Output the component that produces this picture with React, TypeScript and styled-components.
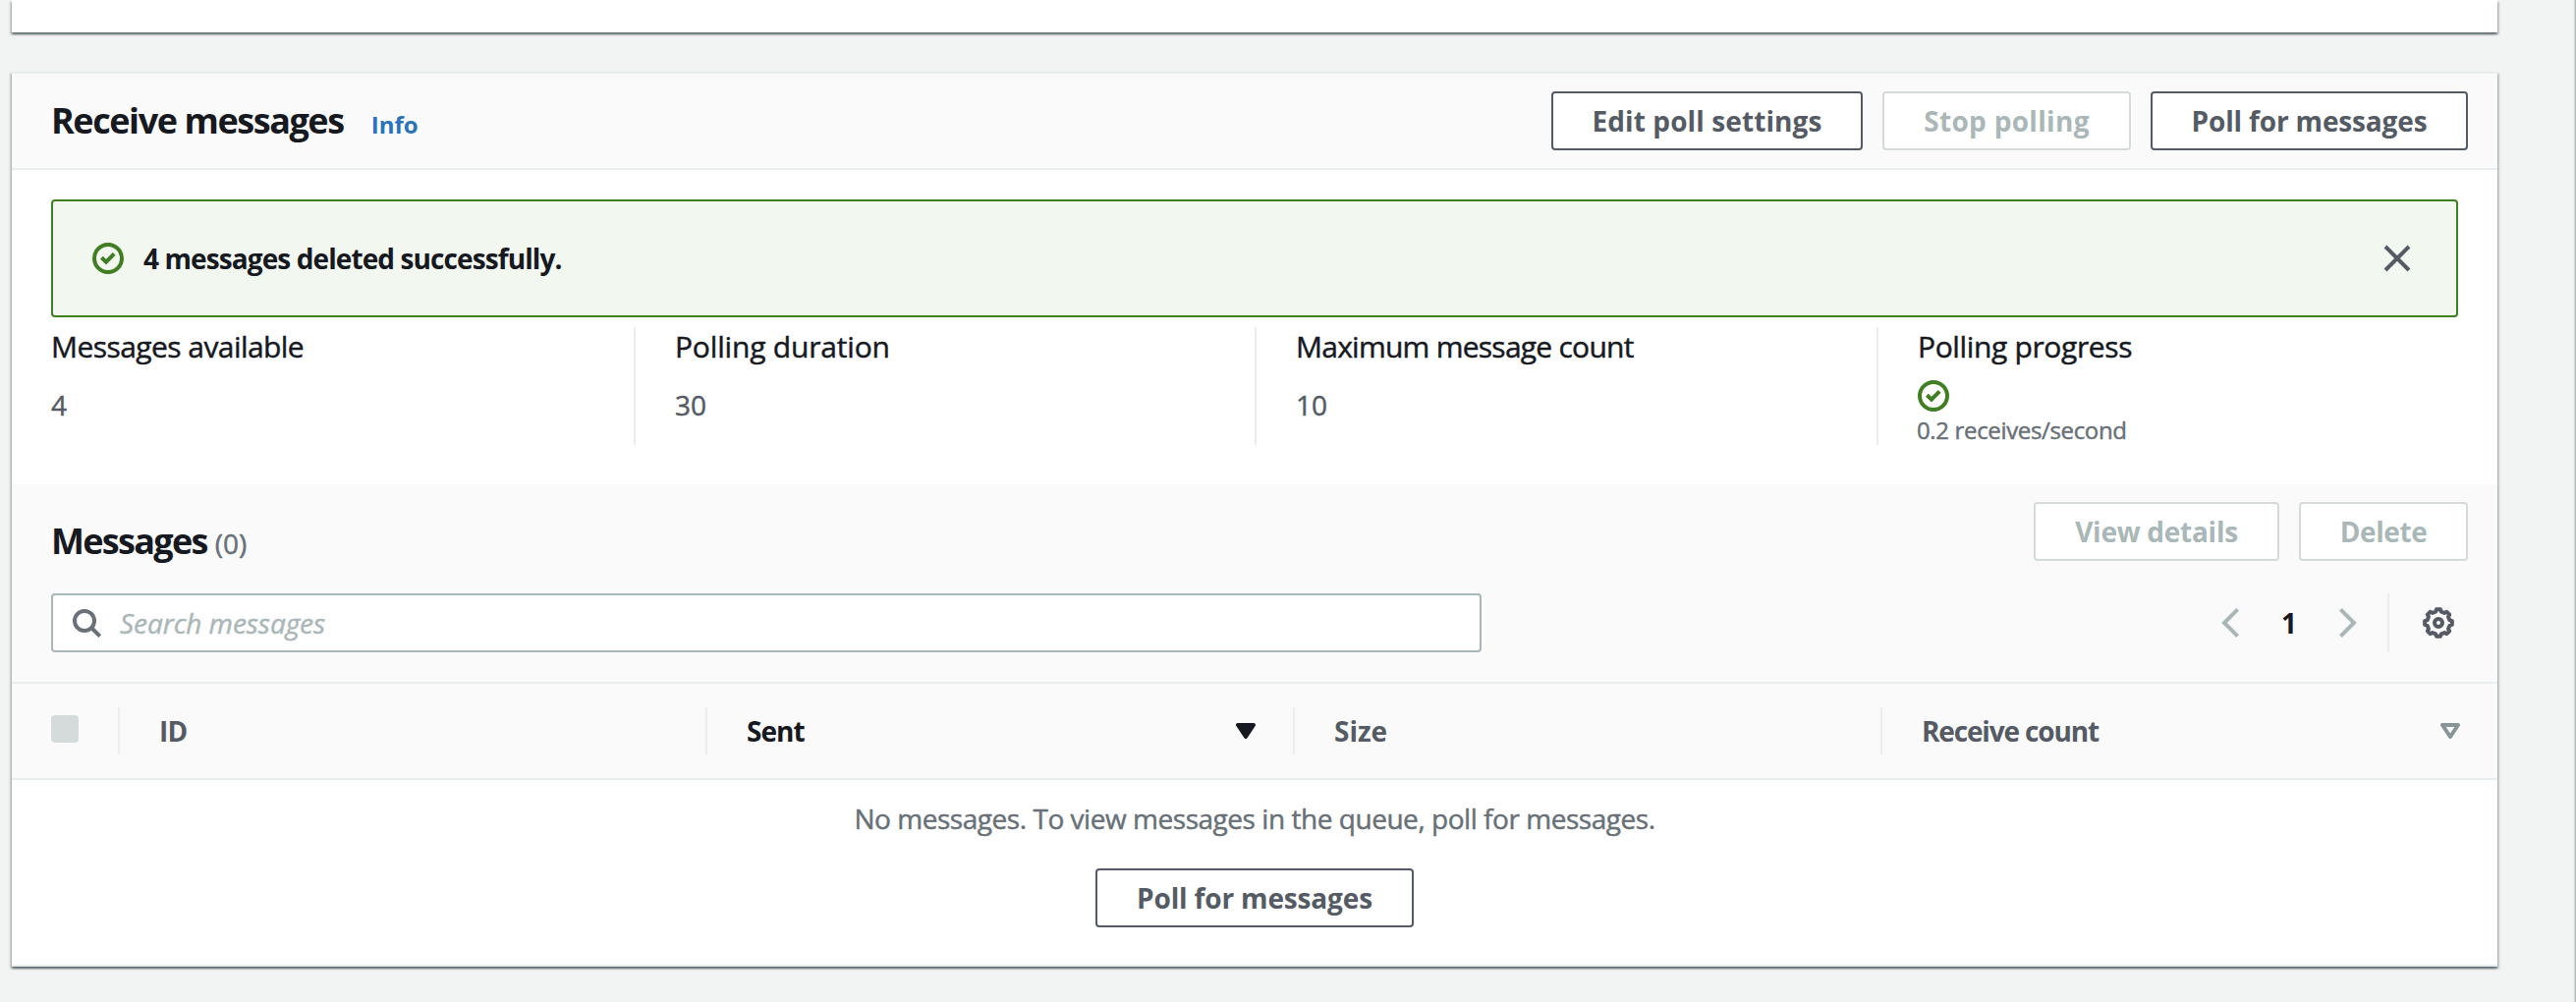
import React from "react";
import styled, { createGlobalStyle, css } from "styled-components";

const color = {
  page: "#f2f3f3",
  surface: "#ffffff",
  header: "#fafafa",
  line: "#eaeded",
  text: "#16191f",
  secondary: "#545b64",
  muted: "#687078",
  disabled: "#aab7b8",
  disabledLine: "#d5dbdb",
  sort: "#879596",
  green: "#3f7f22",
  greenTint: "#f2f7f0",
  link: "#2a73b8",
};

const GlobalStyle = createGlobalStyle`
  *, *::before, *::after { box-sizing: border-box; }
  body {
    margin: 0;
    background: ${color.page};
    font-family: "Open Sans", "Noto Sans", sans-serif;
    font-size: 28px;
    color: ${color.text};
    overflow: hidden;
  }
  h2, p { margin: 0; }
  svg { display: block; flex: none; }
`;

/* Thickens the regular cut a little, between regular and medium. */
const sturdyText = css`
  -webkit-text-stroke: 0.45px currentColor;
`;

const Page = styled.div`
  display: flex;
  justify-content: space-between;
  width: 2622px;
  height: 1020px;
  overflow: hidden;
  background: ${color.page};
`;

const Column = styled.main`
  display: flex;
  flex-direction: column;
  gap: 40px;
  width: 2530px;
  margin-left: 12px;
`;

const SidePanelEdge = styled.aside`
  width: 1px;
  background: #b6bdbf;
  box-shadow: -1px 0 1px rgba(0, 28, 36, 0.15);
`;

const Card = styled.section`
  background: ${color.surface};
  box-shadow: 0 2px 2px 0 rgba(0, 28, 36, 0.5), 2px 2px 2px 0 rgba(0, 28, 36, 0.15),
    -2px 2px 2px 0 rgba(0, 28, 36, 0.15);
`;

const PreviousCard = styled(Card)`
  height: 33px;
`;

const MainCard = styled(Card)`
  height: 911px;
  border-top: 2px solid ${color.line};
  border-bottom: 2px solid ${color.line};
`;

const CardHeader = styled.header`
  display: flex;
  justify-content: space-between;
  height: 98px;
  padding: 18px 30px 18px 40px;
  background: ${color.header};
  border-bottom: 2px solid ${color.line};
`;

const TitleGroup = styled.div`
  display: flex;
  align-items: baseline;
  white-space: nowrap;
`;

const Title = styled.h2<{ $spacing: number }>`
  font-size: 36px;
  line-height: 60px;
  font-weight: 700;
  letter-spacing: ${(p) => p.$spacing}px;
`;

const InfoLink = styled.a`
  margin-left: 28px;
  font-size: 24px;
  font-weight: 700;
  color: ${color.link};
`;

const Counter = styled.span`
  ${sturdyText}
  margin-left: 8px;
  color: ${color.muted};
  letter-spacing: 0.1px;
`;

const Actions = styled.div`
  display: flex;
  gap: 20px;
`;

const Button = styled.button<{ $width: number; $spacing: number }>`
  width: ${(p) => p.$width}px;
  height: 60px;
  padding: 0;
  border: 2px solid ${color.secondary};
  border-radius: 4px;
  background: ${color.surface};
  color: ${color.secondary};
  font: 700 28px/38px "Open Sans", "Noto Sans", sans-serif;
  letter-spacing: ${(p) => p.$spacing}px;
  white-space: nowrap;
  ${(p) =>
    p.disabled &&
    css`
      border-color: ${color.disabledLine};
      color: ${color.disabled};
    `}
`;

const Alert = styled.div`
  display: flex;
  align-items: center;
  width: 2450px;
  height: 120px;
  margin: 30px 0 10px 40px;
  padding: 0 44px 0 40px;
  border: 2px solid ${color.green};
  border-radius: 4px;
  background: ${color.greenTint};
`;

const AlertText = styled.p`
  flex: 1;
  margin-left: 20px;
  line-height: 38px;
  font-weight: 700;
  letter-spacing: -0.9px;
`;

const Metrics = styled.div`
  display: grid;
  grid-template-columns: 635px 632px 633px 1fr;
  height: 160px;
  padding-bottom: 40px;
`;

const Metric = styled.div`
  display: flex;
  flex-direction: column;
  align-items: flex-start;
  padding-left: 40px;
  border-right: 2px solid ${color.line};
  white-space: nowrap;
  &:last-child {
    border-right: none;
  }
`;

const MetricLabel = styled.div<{ $spacing: number }>`
  ${sturdyText}
  font-size: 30px;
  line-height: 40px;
  letter-spacing: ${(p) => p.$spacing}px;
`;

const MetricValue = styled.div`
  ${sturdyText}
  margin-top: 19px;
  line-height: 40px;
  color: ${color.secondary};
`;

const PollStatus = styled.div`
  display: flex;
  flex-direction: column;
  gap: 4px;
  margin-top: 14px;
`;

const PollRate = styled.div`
  ${sturdyText}
  margin-left: -1px;
  font-size: 24px;
  line-height: 30px;
  letter-spacing: -0.35px;
  color: ${color.muted};
`;

const TableTools = styled.div`
  height: 203px;
  padding: 18px 30px 0 40px;
  background: ${color.header};
  border-bottom: 2px solid ${color.line};
`;

const ToolsTop = styled.div`
  display: flex;
  justify-content: space-between;
  height: 93px;
`;

const MessagesTitleGroup = styled(TitleGroup)`
  margin-top: 10px;
`;

const ToolsBottom = styled.div`
  display: flex;
  justify-content: space-between;
  height: 60px;
`;

const SearchBox = styled.label`
  display: flex;
  align-items: center;
  width: 1456px;
  padding-left: 20px;
  border: 2px solid ${color.disabled};
  border-radius: 4px;
  background: ${color.surface};
`;

const SearchInput = styled.input`
  flex: 1;
  height: 56px;
  margin-left: 16px;
  padding: 0;
  border: none;
  outline: none;
  background: transparent;
  font: 28px/40px "Open Sans", "Noto Sans", sans-serif;
  &::placeholder {
    ${sturdyText}
    color: ${color.disabled};
    font-style: italic;
    letter-spacing: -0.06px;
    opacity: 1;
  }
`;

const Pagination = styled.nav`
  display: flex;
  align-items: center;
`;

const PageNumber = styled.span`
  width: 102px;
  text-align: center;
  line-height: 38px;
  font-weight: 700;
`;

const Preferences = styled.div`
  display: flex;
  align-items: center;
  height: 60px;
  margin-left: 31px;
  padding: 0 14px 0 34px;
  border-left: 2px solid ${color.line};
`;

const TableHead = styled.div`
  display: grid;
  grid-template-columns: 110px 598px 598px 598px 1fr;
  height: 98px;
  padding: 24px 0;
  background: ${color.header};
  border-bottom: 2px solid ${color.line};
`;

const HeadCell = styled.div<{ $spacing?: number; $active?: boolean }>`
  display: flex;
  align-items: center;
  justify-content: space-between;
  height: 48px;
  padding: 0 38px 0 40px;
  border-right: 2px solid ${color.line};
  font-weight: 700;
  letter-spacing: ${(p) => p.$spacing ?? 0}px;
  color: ${(p) => (p.$active ? color.text : color.secondary)};
  &:last-child {
    border-right: none;
  }
`;

const HeadText = styled.span`
  line-height: 38px;
`;

const Checkbox = styled.span`
  width: 28px;
  height: 28px;
  margin-bottom: 4px;
  border-radius: 4px;
  background: ${color.disabledLine};
`;

const Empty = styled.div`
  display: flex;
  flex-direction: column;
  align-items: center;
  gap: 31px;
  padding-top: 19px;
`;

const EmptyText = styled.p`
  ${sturdyText}
  line-height: 40px;
  letter-spacing: -0.46px;
  color: ${color.muted};
`;

const SuccessIcon = () => (
  <svg width="32" height="32" viewBox="0 0 16 16" fill="none" stroke={color.green} strokeWidth="2">
    <circle cx="8" cy="8" r="7" />
    <path d="M4.7 7.6 7 9.8l4.1-4.1" />
  </svg>
);

const CloseIcon = () => (
  <svg width="32" height="32" viewBox="0 0 16 16" fill="none" stroke={color.secondary} strokeWidth="2">
    <path d="m2 2 12 12M14 2 2 14" />
  </svg>
);

const SearchIcon = () => (
  <svg width="32" height="32" viewBox="0 0 32 32" fill="none" stroke={color.muted} strokeWidth="4">
    <circle cx="12" cy="14" r="10" />
    <path d="m19 21 8.7 8.7" />
  </svg>
);

const Chevron = ({ right = false }: { right?: boolean }) => (
  <svg width="18" height="30" viewBox="0 0 18 30" fill="none" stroke={color.disabled} strokeWidth="4">
    <path d={right ? "M1.4 1.4 15 15 1.4 28.6" : "M16.6 1.4 3 15l13.6 13.6"} />
  </svg>
);

const gearPoints = Array.from({ length: 8 }, (_, i) =>
  [
    [-14, 11.7],
    [-8, 14],
    [8, 14],
    [14, 11.7],
  ].map(([offset, radius]) => {
    const angle = ((i * 45 + offset) * Math.PI) / 180;
    return `${(16 + radius * Math.sin(angle)).toFixed(2)},${(16 - radius * Math.cos(angle)).toFixed(2)}`;
  })
)
  .flat()
  .join(" ");

const GearIcon = () => (
  <svg width="32" height="32" viewBox="0 0 32 32" fill="none" stroke={color.secondary} strokeLinejoin="round">
    <polygon points={gearPoints} strokeWidth="4" />
    <circle cx="16" cy="16" r="4" strokeWidth="4" />
  </svg>
);

const SortIcon = ({ active = false }: { active?: boolean }) => (
  <svg
    width="20"
    height="16"
    viewBox="0 0 20 16"
    fill={active ? color.text : "none"}
    stroke={active ? color.text : color.sort}
    strokeWidth="4"
    strokeLinejoin="round"
  >
    <path d="M2 2h16l-8 12z" />
  </svg>
);

export default function App() {
  return (
    <>
      <GlobalStyle />
      <Page>
        <Column>
          <PreviousCard />
          <MainCard>
            <CardHeader>
              <TitleGroup>
                <Title $spacing={-1.43}>Receive messages</Title>
                <InfoLink>Info</InfoLink>
              </TitleGroup>
              <Actions>
                <Button $width={317} $spacing={0.1}>Edit poll settings</Button>
                <Button $width={253} $spacing={0.32} disabled>Stop polling</Button>
                <Button $width={323} $spacing={-0.16}>Poll for messages</Button>
              </Actions>
            </CardHeader>

            <Alert>
              <SuccessIcon />
              <AlertText>4 messages deleted successfully.</AlertText>
              <CloseIcon />
            </Alert>

            <Metrics>
              <Metric>
                <MetricLabel $spacing={-0.56}>Messages available</MetricLabel>
                <MetricValue>4</MetricValue>
              </Metric>
              <Metric>
                <MetricLabel $spacing={-0.18}>Polling duration</MetricLabel>
                <MetricValue>30</MetricValue>
              </Metric>
              <Metric>
                <MetricLabel $spacing={-0.75}>Maximum message count</MetricLabel>
                <MetricValue>10</MetricValue>
              </Metric>
              <Metric>
                <MetricLabel $spacing={-0.36}>Polling progress</MetricLabel>
                <PollStatus>
                  <SuccessIcon />
                  <PollRate>0.2 receives/second</PollRate>
                </PollStatus>
              </Metric>
            </Metrics>

            <TableTools>
              <ToolsTop>
                <MessagesTitleGroup>
                  <Title $spacing={-1.7}>Messages</Title>
                  <Counter>(0)</Counter>
                </MessagesTitleGroup>
                <Actions>
                  <Button $width={250} $spacing={-0.27} disabled>View details</Button>
                  <Button $width={172} $spacing={-0.4} disabled>Delete</Button>
                </Actions>
              </ToolsTop>
              <ToolsBottom>
                <SearchBox>
                  <SearchIcon />
                  <SearchInput placeholder="Search messages" />
                </SearchBox>
                <Pagination>
                  <Chevron />
                  <PageNumber>1</PageNumber>
                  <Chevron right />
                  <Preferences>
                    <GearIcon />
                  </Preferences>
                </Pagination>
              </ToolsBottom>
            </TableTools>

            <TableHead>
              <HeadCell>
                <Checkbox />
              </HeadCell>
              <HeadCell $spacing={-0.77}>
                <HeadText>ID</HeadText>
              </HeadCell>
              <HeadCell $spacing={-0.99} $active>
                <HeadText>Sent</HeadText>
                <SortIcon active />
              </HeadCell>
              <HeadCell $spacing={-0.04}>
                <HeadText>Size</HeadText>
              </HeadCell>
              <HeadCell $spacing={-1.15}>
                <HeadText>Receive count</HeadText>
                <SortIcon />
              </HeadCell>
            </TableHead>

            <Empty>
              <EmptyText>No messages. To view messages in the queue, poll for messages.</EmptyText>
              <Button $width={324} $spacing={-0.16}>Poll for messages</Button>
            </Empty>
          </MainCard>
        </Column>
        <SidePanelEdge />
      </Page>
    </>
  );
}
